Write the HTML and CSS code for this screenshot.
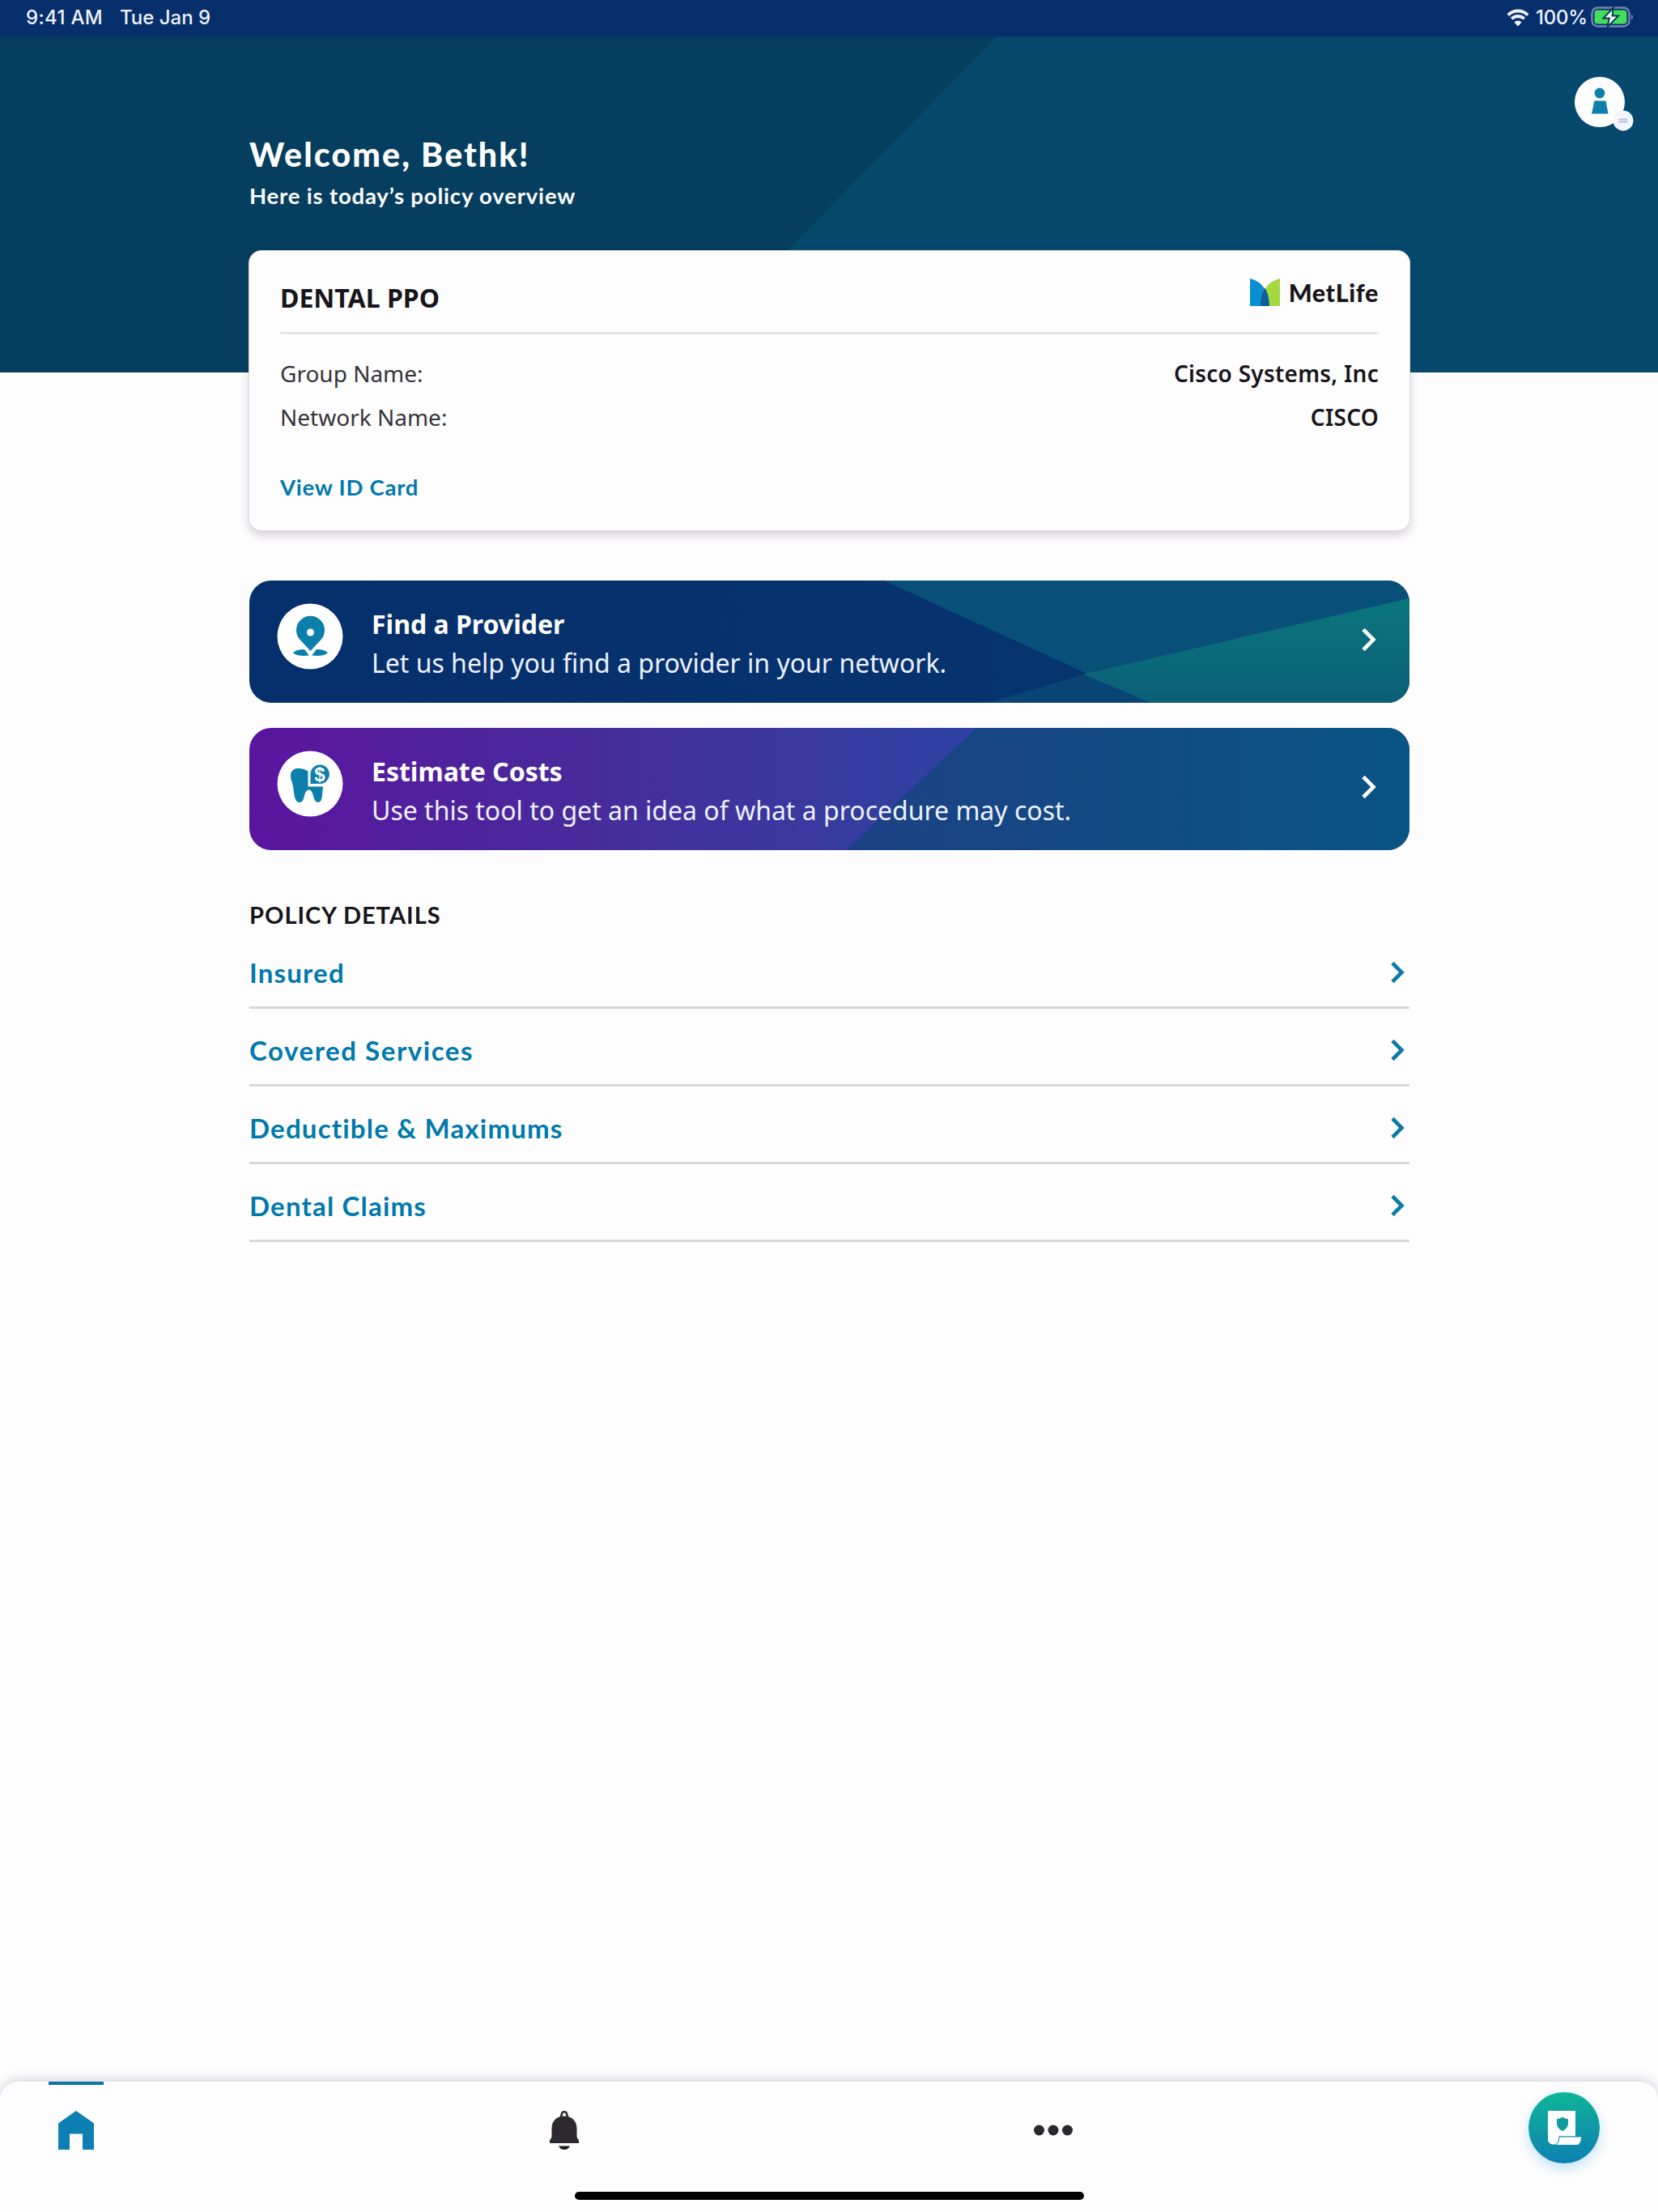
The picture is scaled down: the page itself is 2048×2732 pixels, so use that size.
FILE: index.html
```html
<!DOCTYPE html>
<html lang="en">
<head>
<meta charset="utf-8">
<title>Policy overview</title>
<link rel="stylesheet" href="styles.css">
</head>
<body>
<div class="page">
  <div class="status-bar">
    <span class="status-time">9:41 AM</span>
    <span class="status-date">Tue Jan 9</span>
    <svg class="wifi" viewBox="0 0 28 22" width="28" height="22">
      <path d="M1.8 7.6a17.3 17.3 0 0 1 24.4 0M6.2 12.2a11 11 0 0 1 15.6 0" fill="none" stroke="#eef2ff" stroke-width="3.9"/>
      <path d="M14 21.500l-4.600-5a6.200 6.200 0 0 1 9.200 0z" fill="#eef2ff"/>
    </svg>
    <span class="status-battery">100%</span>
    <svg class="battery" viewBox="0 0 54 27" width="54" height="27">
      <rect x="1.5" y="1.5" width="46" height="23" rx="7" fill="none" stroke="#7685b3" stroke-width="2.4"/>
      <rect x="4.5" y="4.5" width="40" height="17" rx="4" fill="#43dc5c"/>
      <path d="M50 9.5a4 4 0 0 1 0 7z" fill="#7685b3"/>
      <path d="M28 1.500L15.500 14.500h7.500L20.500 25.500 34 11.500h-7.500z" fill="#fff" stroke="#0a3a58" stroke-width="2"/>
    </svg>
  </div>

  <header class="hero">
    <div class="greeting">
      <h1 class="greeting-title">Welcome, Bethk!</h1>
      <p class="greeting-sub">Here is today’s policy overview</p>
    </div>
    <svg class="avatar" viewBox="0 0 74 68" width="74" height="68">
      <circle cx="31" cy="31" r="31" fill="#fff"/>
      <circle cx="31" cy="20" r="6.400" fill="#0d7fab"/>
      <path d="M24.500 29.500h14l3 16H21z" fill="#0d7fab"/>
      <circle cx="60" cy="54" r="12.500" fill="#f3f6ff"/>
      <path d="M54.500 52.500h11M54.500 55.500h11" stroke="#b9bfd6" stroke-width="2"/>
    </svg>
  </header>

  <main class="content">
    <section class="card">
      <div class="card-head">
        <h2 class="card-title">DENTAL PPO</h2>
        <div class="logo">
          <svg viewBox="0 0 37 34" width="37" height="34">
            <path d="M0 0c14 3 24 16 24 34H0z" fill="#0a90d2"/>
            <path d="M37 0C23 3 12.500 16 12.500 34H37z" fill="#a4d93e"/>
            <path d="M18.600 11.800C14.800 17.700 12.500 25.300 12.500 34H24c0-8.800-2-16.200-5.400-22.200z" fill="#0a5f9c"/>
          </svg>
          <span class="logo-text">MetLife</span>
        </div>
      </div>
      <dl class="facts">
        <div class="fact"><dt class="fact-name">Group Name:</dt><dd class="fact-value">Cisco Systems, Inc</dd></div>
        <div class="fact"><dt class="fact-name">Network Name:</dt><dd class="fact-value">CISCO</dd></div>
      </dl>
      <a class="card-link">View ID Card</a>
    </section>

    <a class="action action-provider">
      <svg class="action-art" viewBox="0 0 1433 151" preserveAspectRatio="none">
        <defs>
          <linearGradient id="navy"><stop offset="0" stop-color="#06306b"/><stop offset=".5" stop-color="#06326d"/><stop offset=".8" stop-color="#063570"/></linearGradient>
          <linearGradient id="teal" x1="0" y1="0" x2="0" y2="1"><stop offset="0" stop-color="#0a767c"/><stop offset="1" stop-color="#0b5f78"/></linearGradient>
        </defs>
        <path d="M0 0H1433V151H0z" fill="url(#navy)"/>
        <path d="M784 0H1433V151H1113z" fill="#095078"/>
        <path d="M1030 116L1433 22V151H1113z" fill="url(#teal)"/>
        <path d="M912 151L1030 116 1113 151z" fill="#0a4474"/>
      </svg>
      <svg class="action-icon" viewBox="0 0 82 82" width="82" height="82">
        <circle cx="41" cy="41" r="40.500" fill="#fff"/>
        <path d="M41.500 59L28 44.500a17.500 17.500 0 1 1 27 0z" fill="#0d7fab"/>
        <circle cx="41.500" cy="36" r="4.500" fill="#fff"/>
        <path d="M20 61.500c3-3.500 8-4.500 14-4.500l6 7.500c-8 1-15.500.5-20-3zM63 61.500c-3-3.500-8-4.500-14-4.500l-6 7.500c8 1 15.500.5 20-3z" fill="#0d7fab"/>
      </svg>
      <div class="action-text">
        <strong class="action-title">Find a Provider</strong>
        <span class="action-sub">Let us help you find a provider in your network.</span>
      </div>
      <svg class="action-chevron" viewBox="0 0 20 30" width="20" height="30"><path d="M3 2.500L15.500 15 3 27.500" fill="none" stroke="#fff" stroke-width="4.600"/></svg>
    </a>

    <a class="action action-costs">
      <svg class="action-art" viewBox="0 0 1433 151" preserveAspectRatio="none">
        <defs>
          <linearGradient id="violet"><stop offset="0" stop-color="#5b149f"/><stop offset=".3" stop-color="#472c9b"/><stop offset=".6" stop-color="#2f41a2"/></linearGradient>
          <linearGradient id="blue"><stop offset="0" stop-color="#1c4184"/><stop offset="1" stop-color="#095485"/></linearGradient>
        </defs>
        <path d="M0 0H1433V151H0z" fill="url(#violet)"/>
        <path d="M898 0H1433V151H737z" fill="url(#blue)"/>
      </svg>
      <svg class="action-icon" viewBox="0 0 82 82" width="82" height="82">
        <circle cx="41" cy="41" r="40.500" fill="#fff"/>
        <path d="M38.500 25.500c-5-3-9-4-13-3.500-6 .5-8.500 4.500-8.500 9 0 5 2 8 3 13 1.200 6 1 19.500 7.500 20 4 .3 5.500-3.500 6.500-8 1-4 2.500-7.500 5.500-7.500s4.500 3.500 5.500 7.500c1 4.500 2.500 8.300 6.500 8 5-.5 4.500-11 5.500-19.500H38.500z" fill="#0d7fab"/>
        <path d="M41.500 41V29.500A11.700 11.700 0 1 1 53 41z" fill="#0d7fab"/>
        <text x="53" y="37.500" class="dollar">$</text>
      </svg>
      <div class="action-text">
        <strong class="action-title">Estimate Costs</strong>
        <span class="action-sub">Use this tool to get an idea of what a procedure may cost.</span>
      </div>
      <svg class="action-chevron" viewBox="0 0 20 30" width="20" height="30"><path d="M3 2.500L15.500 15 3 27.500" fill="none" stroke="#fff" stroke-width="4.600"/></svg>
    </a>

    <h2 class="section-title">POLICY DETAILS</h2>
    <nav class="rows">
      <a class="row"><span>Insured</span><svg viewBox="0 0 20 28" width="20" height="28"><path d="M3 2.500L14.500 14 3 25.500" fill="none" stroke="#0a7aa8" stroke-width="4.600"/></svg></a>
      <a class="row row-wide"><span>Covered Services</span><svg viewBox="0 0 20 28" width="20" height="28"><path d="M3 2.500L14.500 14 3 25.500" fill="none" stroke="#0a7aa8" stroke-width="4.600"/></svg></a>
      <a class="row"><span>Deductible &amp; Maximums</span><svg viewBox="0 0 20 28" width="20" height="28"><path d="M3 2.500L14.500 14 3 25.500" fill="none" stroke="#0a7aa8" stroke-width="4.600"/></svg></a>
      <a class="row"><span>Dental Claims</span><svg viewBox="0 0 20 28" width="20" height="28"><path d="M3 2.500L14.500 14 3 25.500" fill="none" stroke="#0a7aa8" stroke-width="4.600"/></svg></a>
    </nav>
  </main>

  <footer class="tabbar">
    <div class="tabs">
      <a class="tab tab-active">
        <svg viewBox="0 0 44 48" width="44" height="48"><path d="M22 0l22 15.500V48H30V28.500H14V48H0V15.500z" fill="#0d7fb2"/></svg>
      </a>
      <a class="tab">
        <svg viewBox="0 0 38 48" width="38" height="48">
          <path d="M14.500 9l1.500-5.500c.8-3 5.200-3 6 0L23.500 9" fill="none" stroke="#2c2a2e" stroke-width="2.500"/>
          <path d="M3.500 22C3.500 13 9 6.500 19 6.500S34.500 13 34.500 22v9c0 2 1 3.500 2.500 5.500v3.500H1v-3.500C2.500 34.500 3.500 33 3.500 31z" fill="#2c2a2e"/>
          <path d="M12 43.500h14c-1.500 3-4 4.500-7 4.500s-5.500-1.500-7-4.500z" fill="#1b1a1d"/>
        </svg>
      </a>
      <a class="tab">
        <svg viewBox="0 0 48 48" width="48" height="48"><g fill="#2a282c"><circle cx="6.500" cy="24" r="6.500"/><circle cx="24" cy="24" r="6.500"/><circle cx="41.500" cy="24" r="6.500"/></g></svg>
      </a>
      <a class="fab">
        <svg viewBox="0 0 42 44" width="42" height="44">
          <path d="M1 1h34v31H14.500c0 6-1.500 10-5.500 10.500C4 43 1 40 1 36z" fill="#fff"/>
          <path d="M15.500 33.500H42c0 5-2 9.500-5 9.500H11c3-2 4.500-5 4.500-9.500z" fill="#fff"/>
          <path d="M14 33h21" stroke="#7cc4cf" stroke-width="1.200"/>
          <path d="M19 8.500c2.500 2 5 2.500 7 2.500v5.500c0 4.500-3 7.500-7 9.500-4-2-7-5-7-9.500V11c2 0 4.500-.5 7-2.500z" fill="#0f9b9f"/>
        </svg>
      </a>
    </div>
    <div class="home-indicator"></div>
  </footer>
</div>
</body>
</html>
```
FILE: styles.css
```css
* { box-sizing: border-box; }
body { margin: 0; background: #fefdfe; color: #17161a; font-family: "Noto Sans", sans-serif; }
h1, h2, p, dl, dd { margin: 0; }

.page { width: 2048px; height: 2732px; display: flex; flex-direction: column; overflow: hidden; }

.status-bar {
  height: 45px; padding: 0 29px 2px 32px; display: flex; align-items: center; flex: none;
  background: #062f6c; color: #eef2ff;
  font: 500 24px/43px "Inter", sans-serif; letter-spacing: .3px;
}
.status-date { margin-left: 21px; letter-spacing: 0; }
.wifi { margin-left: auto; }
.status-battery { margin-left: 8px; letter-spacing: -.2px; }
.battery { margin-left: 4px; }

.hero {
  height: 415px; flex: none; display: flex; justify-content: space-between;
  padding: 50px 29px 0 308px;
  background: linear-gradient(134.500deg, #063e60 0 50.150%, #07496d 50.200%);
}
.greeting { padding-top: 72px; color: #fff; font-family: "Lato", sans-serif; }
.greeting-title { font-size: 41px; line-height: 48px; font-weight: 900; letter-spacing: 2.200px; }
.greeting-sub { margin-top: 10px; font-size: 27.500px; line-height: 34px; font-weight: 700; letter-spacing: .820px; }
.avatar { flex: none; }

.content { width: 1433px; margin: -150px 0 0 308px; }
.card {
  height: 345px; padding: 0 38px; background: #fefdfe; border-radius: 15px;
  box-shadow: 0 0 0 1px #dddbe0, 0 5px 12px 1px rgba(40, 30, 50, .2);
}
.card-head {
  height: 103px; padding-top: 34px; border-bottom: 3px solid #e7e5e8;
  display: flex; justify-content: space-between; align-items: flex-start;
}
.card-title { margin-top: 2px; font-size: 32px; line-height: 44px; font-weight: 700; }
.logo { display: flex; gap: 11px; }
.logo-text { font: 900 30.500px/34px "Lato", sans-serif; letter-spacing: .600px; }
.facts { padding-top: 21px; }
.fact { display: flex; justify-content: space-between; font-size: 28px; line-height: 54px; }
.fact-name { color: #35343a; }
.fact-value { font-weight: 600; letter-spacing: .250px; }
.card-link { display: block; margin-top: 43px; font: 700 27.500px/34px "Lato", sans-serif; letter-spacing: .750px; color: #0079ac; }

.action {
  height: 151px; margin-top: 62px; padding: 0 40px 0 35px; border-radius: 27px;
  display: flex; align-items: flex-start; color: #fff; position: relative; overflow: hidden; isolation: isolate;
}
.action-costs { margin-top: 31px; }
/* background facets sit behind the label and icon */
.action-art { position: absolute; inset: 0; width: 100%; height: 100%; z-index: -1; }
.action-icon { margin: 28px 0 0 -1px; flex: none; }
.dollar { font: 700 24px "Liberation Sans", sans-serif; fill: #fff; text-anchor: middle; }
.action-text { margin: 30px auto 0 35px; display: flex; flex-direction: column; font-size: 32px; line-height: 48px; }
.action-title { font-weight: 700; }
.action-sub { color: #edf1ff; }
.action-chevron { margin-top: 58px; }

.section-title { margin-top: 62px; font: 700 29px/36px "Lato", sans-serif; letter-spacing: 1px; }
.rows { margin-top: 2px; }
.row {
  height: 96px; padding: 31px 4px 22px 0; border-bottom: 3px solid #d9d7db;
  display: flex; justify-content: space-between; align-items: center;
  font: 700 33px/40px "Lato", sans-serif; letter-spacing: 1.200px; color: #0079ac;
}
.row-wide { letter-spacing: 1.560px; }

.tabbar {
  height: 161px; margin-top: auto; flex: none; border-radius: 22px 22px 0 0; background: #fefdfe;
  box-shadow: 0 -3px 14px rgba(40, 30, 50, .18);
}
.tabs { height: 136px; padding-left: 60px; display: grid; grid-template-columns: 603px 604px 621px 88px; }
.tab { width: 68px; padding-top: 36px; display: flex; justify-content: center; align-items: flex-start; }
.tab-active { border-top: 4px solid #0d73a8; padding-top: 32px; }
.fab {
  width: 88px; height: 88px; margin-top: 13px; border-radius: 50%; display: flex; align-items: center; justify-content: center;
  background: linear-gradient(175deg, #0fb795, #0e7db5); box-shadow: 0 6px 16px rgba(20, 160, 220, .28);
}
.home-indicator { width: 629px; height: 10px; margin-left: 710px; border-radius: 5px; background: #000; }
```
